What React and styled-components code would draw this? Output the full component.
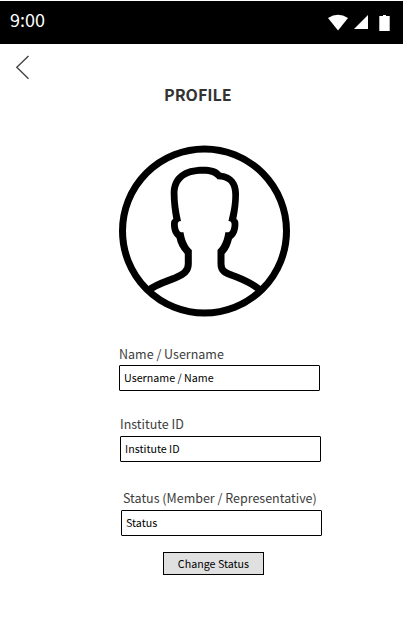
import React from "react";
import styled, { createGlobalStyle } from "styled-components";

const GlobalStyle = createGlobalStyle`
  * { box-sizing: border-box; }
  body {
    margin: 0;
    background: #fff;
    font-family: "Noto Sans CJK SC", "Noto Sans", sans-serif;
  }
`;

const Screen = styled.main`
  display: flex;
  flex-direction: column;
  width: 403px;
  height: 641px;
  overflow: hidden;
  background: #fff;
`;

const StatusBar = styled.header`
  display: flex;
  justify-content: space-between;
  height: 43px;
  margin-top: 1px;
  padding: 0 12px 0 10px;
  background: #000;
`;

const Clock = styled.time`
  height: 37px;
  line-height: 36px;
  font-size: 18px;
  color: #fff;
`;

const Indicators = styled.div`
  display: flex;
  align-items: flex-start;
  padding-top: 13px;

  svg { display: block; }
`;

const BackButton = styled.button`
  width: 16px;
  height: 26px;
  margin: 10px 0 0 15px;
  padding: 0;
  border: 0;
  background: none;

  svg { display: block; }
`;

const Title = styled.h1`
  height: 24px;
  margin: 2px 0 0 164px;
  line-height: 24px;
  font-size: 16px;
  font-weight: 700;
  color: #333;
`;

const Avatar = styled.svg`
  display: block;
  flex: none;
  width: 172px;
  height: 172px;
  margin: 39px 0 0 119px;
`;

const Form = styled.form`
  display: flex;
  flex-direction: column;
  align-items: flex-start;
  padding-top: 27px;
`;

const Field = styled.div`
  display: flex;
  flex-direction: column;
  height: ${(p) => p.$height}px;
  margin-left: ${(p) => p.$left}px;
`;

const Label = styled.label`
  height: 20px;
  margin-left: ${(p) => p.$indent || 0}px;
  margin-bottom: ${(p) => p.$gap}px;
  line-height: 20px;
  font-size: 12.5px;
  white-space: nowrap;
  color: #3c3c3c;
`;

const TextBox = styled.div`
  width: 201px;
  height: 26px;
  padding-left: 4px;
  border: 1px solid #000;
  border-radius: 1px;
  line-height: 23px;
  font-size: 10.7px;
  color: #000;
`;

const ChangeButton = styled.button`
  width: 101px;
  height: 23px;
  margin: 1px 0 0 163px;
  padding: 0;
  border: 1px solid #000;
  background: #e0e0e0;
  font-family: inherit;
  font-size: 10.7px;
  line-height: 21px;
  color: #000;
`;

export default function App() {
  return (
    <Screen>
      <GlobalStyle />
      <StatusBar>
        <Clock>9:00</Clock>
        <Indicators>
          <svg width="63" height="20" viewBox="328 14 63 20" fill="#fff">
            <path d="M328 18Q338 11.3 348 18L338 30.5Z" />
            <path d="M368 15V29H354Z" />
            <path d="M379.3 16H383V15H386V16H389.7V31H379.3Z" />
          </svg>
        </Indicators>
      </StatusBar>
      <BackButton type="button" aria-label="Back">
        <svg width="16" height="26" viewBox="15 54 16 26">
          <path d="M28.5 56L16.8 67.3L28.5 78.7" fill="none" stroke="#444" strokeWidth="1.4" />
        </svg>
      </BackButton>
      <Title>PROFILE</Title>
      <Avatar viewBox="119 145 172 172" fill="none">
        <g stroke="#000" strokeWidth="7">
          <circle cx="204.5" cy="231" r="82" />
          <path d="M149 290C157 284 165 282 175 278C184 274 188.300 271 188.300 264V250" />
          <path d="M260 290C252 283 244 280 234 276C225 273 221 271 221 264V250" />
        </g>
        <path
          fill="#000"
          d="M185 254C180 249 177.500 243 176.500 238C172 234 171 229 171 224C171 221 171.800 219.800 173.300 219C171.700 210 170.700 201 170.700 193C171 175 184 166.700 203 166.700C211 166.700 217 168 221 172.700C233 174 239 182 239 194C239 202 238 211 236.300 219C238 220 238.400 221.500 238.400 224C238.400 230 236.500 236 232 239C230.500 245 228.500 250 224.500 254L217.500 250C222 246 224.500 239 225.300 232.300H228.500C231 231 231.600 227 231.600 224C231.500 222 230.500 221 228.500 221C230 214 232.300 206 232.300 195C232.300 184 228 179.500 217.500 179.300C214 175 211 173.700 203 173.700C185 173.700 177.500 181 177.500 194C177.500 203 179 212 181 221C179 221 177.800 222 177.800 224C177.800 227 178.500 231 181 232.300H183.500C184.500 239 187 246 191.700 250Z"
        />
      </Avatar>
      <Form>
        <Field $left={119} $height={70}>
          <Label $gap={1}>Name / Username</Label>
          <TextBox>Username / Name</TextBox>
        </Field>
        <Field $left={120} $height={74}>
          <Label $gap={2}>Institute ID</Label>
          <TextBox>Institute ID</TextBox>
        </Field>
        <Field $left={121} $height={63}>
          <Label $indent={2} $gap={2}>Status (Member / Representative)</Label>
          <TextBox>Status</TextBox>
        </Field>
        <ChangeButton type="button">Change Status</ChangeButton>
      </Form>
    </Screen>
  );
}
